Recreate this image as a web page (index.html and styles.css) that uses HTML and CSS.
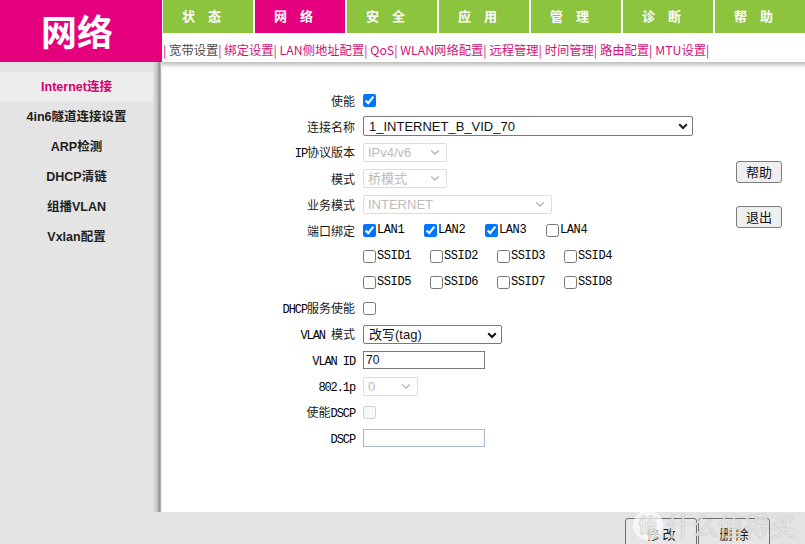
FILE: index.html
```html
<!DOCTYPE html>
<html lang="zh-CN">
<head>
<meta charset="utf-8">
<title>网络 - Internet连接</title>
<link rel="stylesheet" href="styles.css">
</head>
<body>
<div class="page">
  <header class="top">
    <div class="logo">网络</div>
    <div class="topright">
      <nav class="tabs">
        <a class="tab">状态</a>
        <a class="tab on">网络</a>
        <a class="tab">安全</a>
        <a class="tab">应用</a>
        <a class="tab">管理</a>
        <a class="tab">诊断</a>
        <a class="tab">帮助</a>
      </nav>
      <div class="subnav">| <span class="cur">宽带设置</span>| 绑定设置| LAN侧地址配置| QoS| WLAN网络配置| 远程管理| 时间管理| 路由配置| MTU设置|</div>
    </div>
  </header>

  <div class="main">
    <aside class="side">
      <a class="item on">Internet连接</a>
      <a class="item">4in6隧道连接设置</a>
      <a class="item">ARP检测</a>
      <a class="item">DHCP清链</a>
      <a class="item">组播VLAN</a>
      <a class="item">Vxlan配置</a>
    </aside>

    <section class="content">
      <form class="form">
        <label class="lbl">使能</label>
        <div class="ctl"><input type="checkbox" class="cb" checked></div>

        <label class="lbl">连接名称</label>
        <div class="ctl">
          <span class="sel w-name">
            <select><option>1_INTERNET_B_VID_70</option></select>
            <svg class="chev" width="10" height="7" viewBox="0 0 10 7"><polyline points="1.2,1.2 5,5 8.8,1.2" fill="none" stroke="#222" stroke-width="2"/></svg>
          </span>
        </div>

        <label class="lbl"><span class="en">IP</span>协议版本</label>
        <div class="ctl">
          <span class="sel dis w-ip">
            <select disabled><option>IPv4/v6</option></select>
            <svg class="chev" width="10" height="7" viewBox="0 0 10 7"><polyline points="1.2,1.5 5,5 8.8,1.5" fill="none" stroke="#b4b4b4" stroke-width="1.3"/></svg>
          </span>
        </div>

        <label class="lbl">模式</label>
        <div class="ctl">
          <span class="sel dis w-ip">
            <select disabled><option>桥模式</option></select>
            <svg class="chev" width="10" height="7" viewBox="0 0 10 7"><polyline points="1.2,1.5 5,5 8.8,1.5" fill="none" stroke="#b4b4b4" stroke-width="1.3"/></svg>
          </span>
        </div>

        <label class="lbl">业务模式</label>
        <div class="ctl">
          <span class="sel dis w-svc">
            <select disabled><option>INTERNET</option></select>
            <svg class="chev" width="10" height="7" viewBox="0 0 10 7"><polyline points="1.2,1.5 5,5 8.8,1.5" fill="none" stroke="#b4b4b4" stroke-width="1.3"/></svg>
          </span>
        </div>

        <label class="lbl">端口绑定</label>
        <div class="ctl">
          <label class="opt lan"><input type="checkbox" class="cb" checked>LAN1</label><label class="opt lan"><input type="checkbox" class="cb" checked>LAN2</label><label class="opt lan"><input type="checkbox" class="cb" checked>LAN3</label><label class="opt lan"><input type="checkbox" class="cb">LAN4</label>
        </div>

        <span class="lbl"></span>
        <div class="ctl">
          <label class="opt ssid"><input type="checkbox" class="cb">SSID1</label><label class="opt ssid"><input type="checkbox" class="cb">SSID2</label><label class="opt ssid"><input type="checkbox" class="cb">SSID3</label><label class="opt ssid"><input type="checkbox" class="cb">SSID4</label>
        </div>

        <span class="lbl"></span>
        <div class="ctl">
          <label class="opt ssid"><input type="checkbox" class="cb">SSID5</label><label class="opt ssid"><input type="checkbox" class="cb">SSID6</label><label class="opt ssid"><input type="checkbox" class="cb">SSID7</label><label class="opt ssid"><input type="checkbox" class="cb">SSID8</label>
        </div>

        <label class="lbl"><span class="en">DHCP</span>服务使能</label>
        <div class="ctl"><input type="checkbox" class="cb"></div>

        <label class="lbl"><span class="en">VLAN </span>模式</label>
        <div class="ctl">
          <span class="sel w-vlan">
            <select><option>改写(tag)</option></select>
            <svg class="chev" width="10" height="7" viewBox="0 0 10 7"><polyline points="1.2,1.2 5,5 8.8,1.2" fill="none" stroke="#111" stroke-width="2"/></svg>
          </span>
        </div>

        <label class="lbl"><span class="en">VLAN ID</span></label>
        <div class="ctl"><input type="text" class="txt" value="70"></div>

        <label class="lbl"><span class="en">802.1p</span></label>
        <div class="ctl">
          <span class="sel dis w-p">
            <select disabled><option>0</option></select>
            <svg class="chev" width="10" height="7" viewBox="0 0 10 7"><polyline points="1.2,1.5 5,5 8.8,1.5" fill="none" stroke="#b4b4b4" stroke-width="1.3"/></svg>
          </span>
        </div>

        <label class="lbl">使能<span class="en">DSCP</span></label>
        <div class="ctl"><input type="checkbox" class="cb" disabled></div>

        <label class="lbl"><span class="en">DSCP</span></label>
        <div class="ctl"><input type="text" class="txt light" value=""></div>
      </form>

      <div class="btncol">
        <button type="button" class="btn">帮助</button>
        <button type="button" class="btn">退出</button>
      </div>
    </section>
  </div>

  <footer class="bottom">
    <button type="button" class="fbtn">修 改</button>
    <button type="button" class="fbtn">删 除</button>
  </footer>

  <div class="wm"><span class="wm-c">值</span><span class="wm-t">什么值得买</span></div>
</div>
</body>
</html>
```

FILE: styles.css
```css
* { box-sizing: border-box; }

html, body {
  margin: 0;
  padding: 0;
}

body {
  width: 805px;
  height: 544px;
  overflow: hidden;
  background: #fff;
  font-family: "Noto Sans CJK SC", "Liberation Sans", sans-serif;
  color: #222;
}

.page {
  position: relative;
  display: grid;
  grid-template-rows: 62px 450px 32px;
  height: 544px;
}

/* ---------- header ---------- */
.top {
  display: flex;
}

.logo {
  width: 162px;
  height: 62px;
  background: #e5007e;
  color: #fff;
  font-weight: 700;
  font-size: 36px;
  line-height: 60px;
  text-align: center;
  padding-right: 8px;
}

.topright {
  flex: 1;
  display: flex;
  flex-direction: column;
}

.tabs {
  display: flex;
  gap: 2px;
  height: 33px;
  padding-left: 1px;
}

.tab {
  flex: 1;
  background: #8cc43e;
  color: #fff;
  font-weight: 700;
  font-size: 13px;
  line-height: 31px;
  text-align: center;
  letter-spacing: 13px;
}

.tab.on {
  background: #e5007e;
}

.subnav {
  height: 29px;
  padding: 6px 0 0 1px;
  font-size: 12.3px;
  line-height: 23px;
  color: #d0137a;
  white-space: nowrap;
}

.subnav .cur {
  color: #4a4a4a;
}

/* ---------- main ---------- */
.main {
  display: grid;
  grid-template-columns: 153px 1fr;
}

.side {
  background: #e4e4e4;
  padding-top: 10px;
  display: flex;
  flex-direction: column;
}

.item {
  height: 30px;
  line-height: 30px;
  text-align: center;
  font-family: "Liberation Sans", "Noto Sans CJK SC", sans-serif;
  font-weight: 700;
  font-size: 12.5px;
  color: #1e1e1e;
}

.item.on {
  background: #ededed;
  color: #d4006f;
}

.content {
  display: flex;
  padding-left: 9px;
  background:
    linear-gradient(to right, #e0e0e0 0, #c4c4c4 4px, #8e8e8e 7px, #d8d8d8 8px, #fff 9px) left top / 9px 100% no-repeat,
    linear-gradient(to bottom, #bdbdbd 0, #dcdcdc 3px, #f4f4f4 5px, #fff 7px) left top / 100% 7px no-repeat,
    #fff;
}

.form {
  flex: 1;
  display: grid;
  grid-template-columns: 193px auto;
  grid-auto-rows: 26px;
  column-gap: 8px;
  align-items: center;
  align-content: start;
  padding-top: 25px;
}

.lbl {
  text-align: right;
  font-size: 12px;
  color: #1a1a1a;
  white-space: nowrap;
}

.en {
  font-family: "Liberation Mono", monospace;
  font-size: 12px;
  letter-spacing: -1.1px;
  color: #000;
}

.ctl {
  display: flex;
  align-items: center;
  white-space: nowrap;
}

.cb {
  margin: 0;
  width: 13px;
  height: 13px;
}

.opt {
  display: inline-block;
  font-family: "Liberation Mono", monospace;
  font-size: 12px;
  letter-spacing: -0.4px;
  color: #000;
  line-height: 13px;
}

.opt .cb {
  vertical-align: bottom;
  margin-right: 1px;
}

.opt.lan { width: 61px; }
.opt.ssid { width: 67px; }

.sel {
  position: relative;
  display: inline-block;
}

.sel select {
  -webkit-appearance: none;
  appearance: none;
  display: block;
  width: 100%;
  height: 20px;
  margin: 0;
  padding: 0 0 0 5px;
  border: 1px solid #7a7a7a;
  border-radius: 2px;
  background: #fff;
  color: #111;
  font-family: "Liberation Sans", "Noto Sans CJK SC", sans-serif;
  font-size: 13px;
}

.sel.dis select {
  height: 19px;
  border-color: #cfcfcf;
  color: #a0a0a0;
  background: #fff;
  padding-left: 4px;
}

.sel .chev {
  position: absolute;
  right: 5px;
  top: 7px;
  pointer-events: none;
}

.sel.dis .chev {
  top: 6px;
  right: 7px;
}

.w-name { width: 330px; }
.w-ip { width: 84px; }
.w-svc { width: 189px; }
.w-vlan { width: 139px; }
.w-vlan select { height: 19px; }
.w-p { width: 55px; }

.txt {
  width: 122px;
  height: 18px;
  margin: 0;
  padding: 0 2px;
  border: 1px solid #7a7a7a;
  border-radius: 0;
  font-family: "Liberation Sans", sans-serif;
  font-size: 12px;
  color: #111;
}

.txt.light {
  border-color: #a8b9cc;
}

.btncol {
  width: 46px;
  margin-right: 23px;
  padding-top: 99px;
  display: flex;
  flex-direction: column;
  gap: 23px;
}

.btn {
  width: 46px;
  height: 22px;
  margin: 0;
  padding: 0;
  border: 1px solid #7b7b7b;
  border-radius: 3px;
  background: #efefef;
  font-family: "Noto Sans CJK SC", sans-serif;
  font-size: 13px;
  line-height: 20px;
  color: #111;
}

/* ---------- footer ---------- */
.bottom {
  background: #e3e3e3;
  display: flex;
  justify-content: flex-end;
  align-items: flex-start;
  gap: 1px;
  padding: 6px 35px 0 0;
  overflow: hidden;
}

.fbtn {
  width: 72px;
  height: 30px;
  margin: 0;
  padding: 0;
  border: 1px solid #6f6f6f;
  border-radius: 3px;
  background: #e6e6e6;
  font-family: "Noto Sans CJK SC", sans-serif;
  font-size: 13px;
  color: #111;
  flex: none;
}

/* ---------- watermark ---------- */
.wm {
  position: absolute;
  left: 633px;
  top: 510px;
  display: flex;
  align-items: center;
  gap: 3px;
  pointer-events: none;
  opacity: 0.85;
}

.wm-c {
  width: 30px;
  height: 30px;
  border-radius: 50%;
  background: rgba(255, 255, 255, 0.8);
  color: #e8e8e8;
  font-size: 20px;
  font-weight: 700;
  line-height: 30px;
  text-align: center;
  text-shadow: 0 0 1px #999;
}

.wm-t {
  font-size: 26px;
  line-height: 30px;
  color: rgba(255, 255, 255, 0.75);
  text-shadow: 0 0 1px #8a8a8a;
}
```
